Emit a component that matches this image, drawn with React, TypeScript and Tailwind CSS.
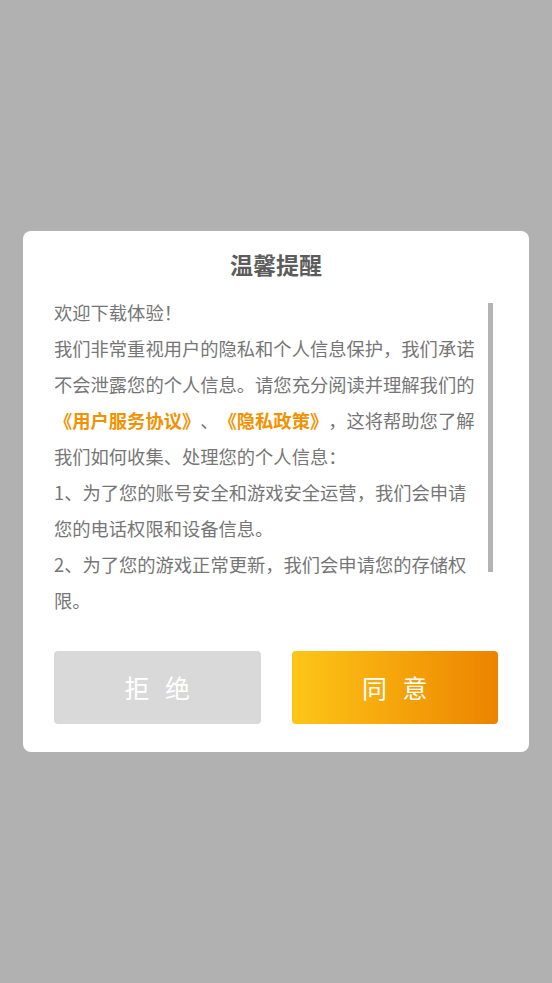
import { useState } from 'react'

const FONT = '"Noto Sans CJK SC", "Noto Sans", sans-serif'

export default function App() {
  const [open, setOpen] = useState(true)

  return (
    <div
      className="flex h-[983px] w-full items-center justify-center bg-[#b1b1b1] px-[23px]"
      style={{ fontFamily: FONT }}
    >
      {open && (
        <div className="flex h-[521px] w-full flex-col rounded-[8px] bg-white px-[31px] pb-[28px] pt-[17px]">
          <h2 className="text-center text-[23px] font-bold leading-[32px] text-[#5c5c5c]">
            温馨提醒
          </h2>

          <div className="relative mt-[14px] h-[333px] overflow-hidden">
            <div className="w-[428px] text-[18.3px] leading-[36px] text-[#767676] [text-spacing-trim:space-all]">
              <p>欢迎下载体验！</p>
              <p>
                我们非常重视用户的隐私和个人信息保护，我们承诺不会泄露您的个人信息。请您充分阅读并理解我们的
                <span className="font-bold text-[#f39200]">《用户服务协议》</span>、
                <span className="font-bold text-[#f39200]">《隐私政策》</span>
                ，这将帮助您了解我们如何收集、处理您的个人信息：
              </p>
              <p>1、为了您的账号安全和游戏安全运营，我们会申请您的电话权限和设备信息。</p>
              <p>2、为了您的游戏正常更新，我们会申请您的存储权限。</p>
              <p>3、我们会严格遵守相关法律法规，保护您的个人信息安全。</p>
            </div>
            {/* scroll thumb */}
            <div className="absolute right-[5px] top-[9px] h-[269px] w-[5px] bg-[#b3b3b3]" />
          </div>

          <div className="mt-auto flex gap-[31px]">
            <button
              onClick={() => setOpen(false)}
              className="flex h-[73px] flex-1 items-center justify-center rounded-[4px] bg-[#d9d9d9] pl-[5px] text-[25px] tracking-[5px] text-white"
            >
              拒 绝
            </button>
            <button
              onClick={() => setOpen(false)}
              className="flex h-[73px] flex-1 items-center justify-center rounded-[4px] bg-gradient-to-r from-[#fdc617] to-[#ec8300] pl-[5px] text-[25px] tracking-[5px] text-white"
            >
              同 意
            </button>
          </div>
        </div>
      )}
    </div>
  )
}
